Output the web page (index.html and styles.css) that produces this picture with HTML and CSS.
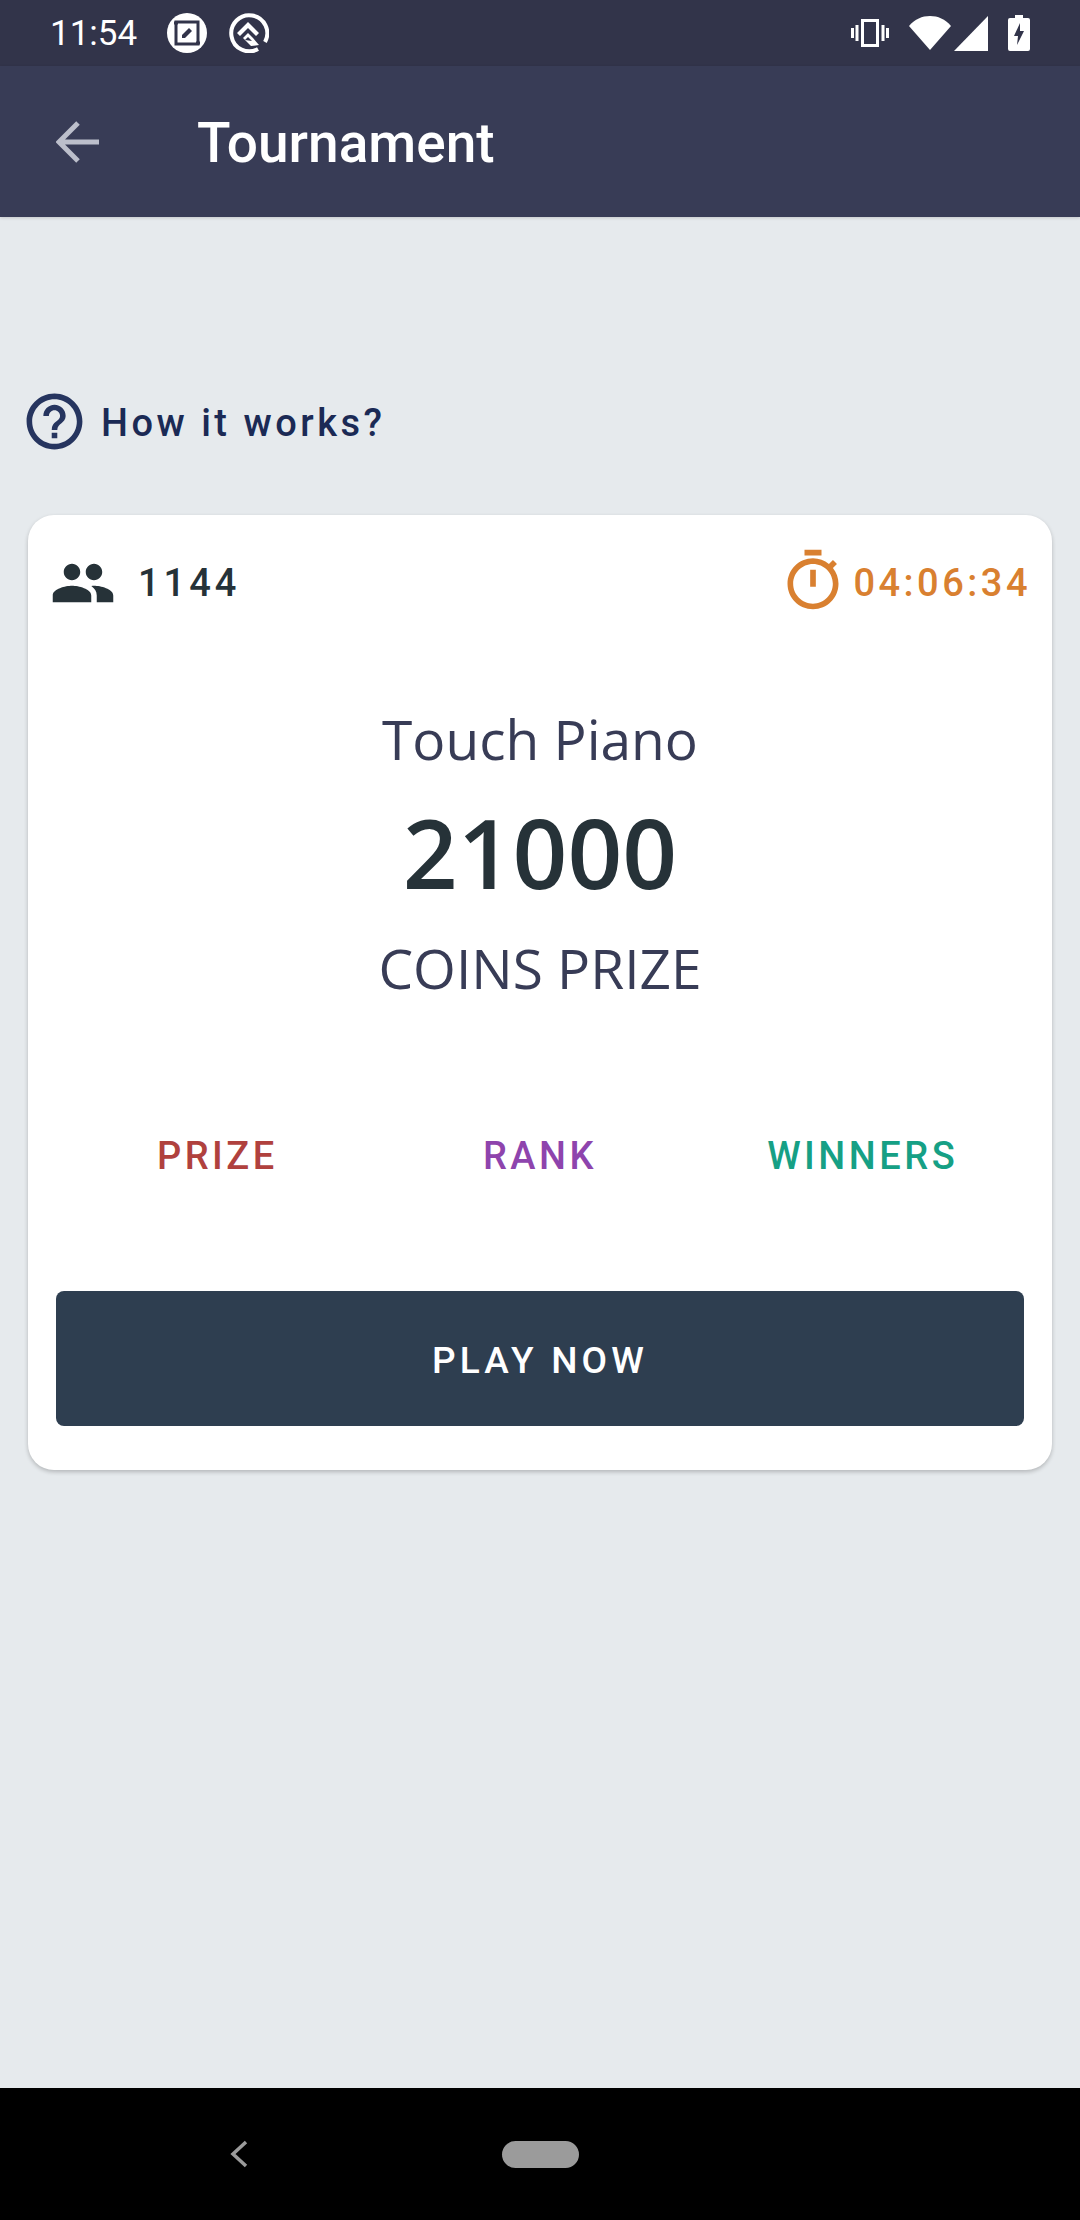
FILE: index.html
```html
<!DOCTYPE html>
<html>
<head>
<meta charset="utf-8">
<title>Tournament</title>
<link rel="stylesheet" href="styles.css">
</head>
<body>

<div class="status-bar">
  <span class="clock">11:54</span>
  <svg class="note-icon" viewBox="0 0 40 40">
    <circle cx="20" cy="20" r="20" fill="#fff"/>
    <path d="M9 9h22v22H9z" fill="none" stroke="#32344a" stroke-width="3"/>
    <path d="M7 10h4M29 30h4" stroke="#32344a" stroke-width="3"/>
    <path d="M15 25v-3l7-7 3 3-7 7z" fill="#32344a"/>
  </svg>
  <svg class="q-icon" viewBox="0 0 40 40">
    <path d="M29 36a18 18 0 1 1 7-7" fill="none" stroke="#fff" stroke-width="4"/>
    <path d="M8 20L19 9l11 11-3 3-8-8-8 8z" fill="#fff"/>
    <path d="M14 25l5-5 5 5 6 7-8 1z" fill="#fff"/>
    <path d="M19 24l-3 3 7 1z" fill="#32344a"/>
  </svg>
  <span class="status-spacer"></span>
  <svg class="vibrate-icon" viewBox="0 0 38 28">
    <path d="M11.500 1.500h15v25h-15z" fill="none" stroke="#fff" stroke-width="3"/>
    <path d="M6 6v16M1.500 9v10M32 6v16M36.500 9v10" stroke="#fff" stroke-width="3"/>
  </svg>
  <svg class="wifi-icon" viewBox="0 0 42 34">
    <path d="M0 10C6 3 13 0 21 0s15 3 21 10L21 34z" fill="#fff"/>
  </svg>
  <svg class="signal-icon" viewBox="0 0 34 35">
    <path d="M34 0v35H0z" fill="#fff"/>
  </svg>
  <svg class="battery-icon" viewBox="0 0 22 36">
    <path d="M7 0h8v3h5a2 2 0 0 1 2 2v29a2 2 0 0 1-2 2H2a2 2 0 0 1-2-2V5a2 2 0 0 1 2-2h5z" fill="#fff"/>
    <path d="M12 8l-6 13h4l-1 9 7-14h-4z" fill="#32344a"/>
  </svg>
</div>

<div class="toolbar">
  <svg class="back-arrow" viewBox="0 0 44 44">
    <path d="M43 22H5M22 3L3 22l19 19" fill="none" stroke="#bcbfcb" stroke-width="5"/>
  </svg>
  <span class="toolbar-title">Tournament</span>
</div>

<div class="main">
  <div class="how-row">
    <svg class="help-icon" viewBox="0 0 24 24">
      <path d="M11 18h2v-2h-2v2zm1-16C6.480 2 2 6.480 2 12s4.480 10 10 10 10-4.480 10-10S17.520 2 12 2zm0 18c-4.410 0-8-3.590-8-8s3.590-8 8-8 8 3.590 8 8-3.590 8-8 8zm0-14c-2.210 0-4 1.790-4 4h2c0-1.100.9-2 2-2s2 .9 2 2c0 2-3 1.750-3 5h2c0-2.250 3-2.500 3-5 0-2.210-1.790-4-4-4z"/>
    </svg>
    <span class="how-text">How it works?</span>
  </div>

  <div class="card">
    <div class="card-top">
      <div class="players">
        <svg class="people-icon" viewBox="0 0 24 24">
          <path d="M16 11c1.660 0 2.990-1.340 2.990-3S17.660 5 16 5c-1.660 0-3 1.340-3 3s1.340 3 3 3zm-8 0c1.660 0 2.990-1.340 2.990-3S9.660 5 8 5C6.340 5 5 6.340 5 8s1.340 3 3 3zm0 2c-2.330 0-7 1.170-7 3.500V19h14v-2.500c0-2.330-4.670-3.500-7-3.500zm8 0c-.29 0-.62.02-.97.05 1.160.84 1.970 1.970 1.970 3.450V19h6v-2.500c0-2.330-4.670-3.500-7-3.500z"/>
        </svg>
        <span class="players-count">1144</span>
      </div>
      <div class="timer">
        <svg class="timer-icon" viewBox="0 0 24 24">
          <path d="M15 1H9v2h6V1zm-4 13h2V8h-2v6zm8.030-6.610l1.420-1.420c-.43-.51-.9-.99-1.410-1.410l-1.420 1.420C16.070 4.740 14.120 4 12 4c-4.970 0-9 4.030-9 9s4.020 9 9 9 9-4.030 9-9c0-2.120-.74-4.070-1.970-5.610zM12 20c-3.870 0-7-3.130-7-7s3.130-7 7-7 7 3.130 7 7-3.130 7-7 7z"/>
        </svg>
        <span class="timer-text">04:06:34</span>
      </div>
    </div>

    <div class="game-name">Touch Piano</div>
    <div class="prize-amount">21000</div>
    <div class="prize-label">COINS PRIZE</div>

    <div class="tabs">
      <span class="tab tab-prize">PRIZE</span>
      <span class="tab tab-rank">RANK</span>
      <span class="tab tab-winners">WINNERS</span>
    </div>

    <div class="play-btn">PLAY NOW</div>
  </div>
</div>

<div class="nav-bar">
  <svg class="nav-back" viewBox="0 0 18 28">
    <path d="M16 2L3 14l13 12" fill="none" stroke="#9b9b9b" stroke-width="3.500"/>
  </svg>
  <div class="nav-pill"></div>
</div>

</body>
</html>
```

FILE: styles.css
```css
html, body {
  margin: 0;
  padding: 0;
}

body {
  width: 1080px;
  height: 2220px;
  display: flex;
  flex-direction: column;
  background-color: #e6eaed;
  font-family: Roboto, sans-serif;
  overflow: hidden;
}

svg {
  display: block;
  flex: none;
}

.status-bar {
  height: 66px;
  display: flex;
  align-items: center;
  padding: 0 50px 0 50px;
  background-color: #32344a;
  color: white;
}

.clock {
  font-size: 35px;
  width: 117px;
}

.note-icon {
  width: 40px;
  height: 40px;
}

.q-icon {
  width: 40px;
  height: 40px;
  margin-left: 22px;
}

.status-spacer {
  flex: 1;
}

.vibrate-icon {
  width: 38px;
  height: 28px;
}

.wifi-icon {
  width: 42px;
  height: 34px;
  margin-left: 20px;
}

.signal-icon {
  width: 34px;
  height: 35px;
  margin-left: 3px;
}

.battery-icon {
  width: 22px;
  height: 36px;
  margin-left: 20px;
}

.toolbar {
  height: 151px;
  display: flex;
  align-items: center;
  padding-left: 56px;
  background-color: #383c56;
  box-shadow: 0 1px 3px rgba(0, 0, 0, 0.15);
}

.back-arrow {
  width: 44px;
  height: 44px;
}

.toolbar-title {
  margin-left: 97px;
  padding-top: 3px;
  color: white;
  font-size: 55px;
  font-weight: 500;
}

.main {
  flex: 1;
  padding: 172px 28px 0 28px;
}

.how-row {
  display: flex;
  align-items: center;
  height: 67px;
  margin-left: -7px;
}

.help-icon {
  width: 67px;
  height: 67px;
  margin-top: -3px;
  fill: #26355f;
}

.how-text {
  margin-left: 13px;
  color: #1b2a55;
  font-size: 38px;
  font-weight: 500;
  letter-spacing: 3.500px;
}

.card {
  margin-top: 59px;
  height: 955px;
  box-sizing: border-box;
  padding: 35px 28px 0 28px;
  background-color: white;
  border-radius: 26px;
  box-shadow: 0 2px 4px rgba(0, 0, 0, 0.22);
}

.card-top {
  display: flex;
  justify-content: space-between;
  align-items: center;
  height: 66px;
  margin-left: -6px;
  margin-right: -7px;
}

.players {
  display: flex;
  align-items: center;
}

.people-icon {
  width: 66px;
  height: 66px;
  fill: #263238;
}

.players-count {
  margin-left: 22px;
  color: #263238;
  font-size: 38px;
  font-weight: 500;
  letter-spacing: 4px;
}

.timer {
  display: flex;
  align-items: center;
}

.timer-icon {
  width: 68px;
  height: 68px;
  margin-top: -4px;
  fill: #d98030;
}

.timer-text {
  margin-left: 6px;
  color: #d98030;
  font-size: 38px;
  font-weight: 500;
  letter-spacing: 3.500px;
}

.game-name,
.prize-amount,
.prize-label {
  font-family: "Open Sans", sans-serif;
  text-align: center;
}

.game-name {
  margin-top: 88px;
  color: #383c56;
  font-size: 55px;
  line-height: 70px;
}

.prize-amount {
  margin-top: 18px;
  color: #263238;
  font-size: 96px;
  font-weight: 600;
  line-height: 120px;
}

.prize-label {
  margin-top: 21px;
  color: #383c56;
  font-size: 55px;
  line-height: 70px;
}

.tabs {
  display: grid;
  grid-template-columns: repeat(3, 1fr);
  margin-top: 131px;
  text-align: center;
}

.tab {
  font-size: 38px;
  font-weight: 500;
  letter-spacing: 3.500px;
}

.tab-prize {
  color: #b0413e;
}

.tab-rank {
  color: #8e44ad;
}

.tab-winners {
  color: #16a085;
}

.play-btn {
  display: flex;
  align-items: center;
  justify-content: center;
  height: 135px;
  margin-top: 113px;
  box-sizing: border-box;
  padding-top: 3px;
  background-color: #2e3e50;
  border-radius: 8px;
  color: white;
  font-size: 37px;
  font-weight: 500;
  letter-spacing: 4.200px;
}

.nav-bar {
  height: 132px;
  flex: none;
  display: flex;
  align-items: center;
  padding-left: 230px;
  background-color: black;
}

.nav-back {
  width: 18px;
  height: 28px;
}

.nav-pill {
  width: 77px;
  height: 27px;
  margin-left: 254px;
  border-radius: 14px;
  background-color: #9b9b9b;
}
```
